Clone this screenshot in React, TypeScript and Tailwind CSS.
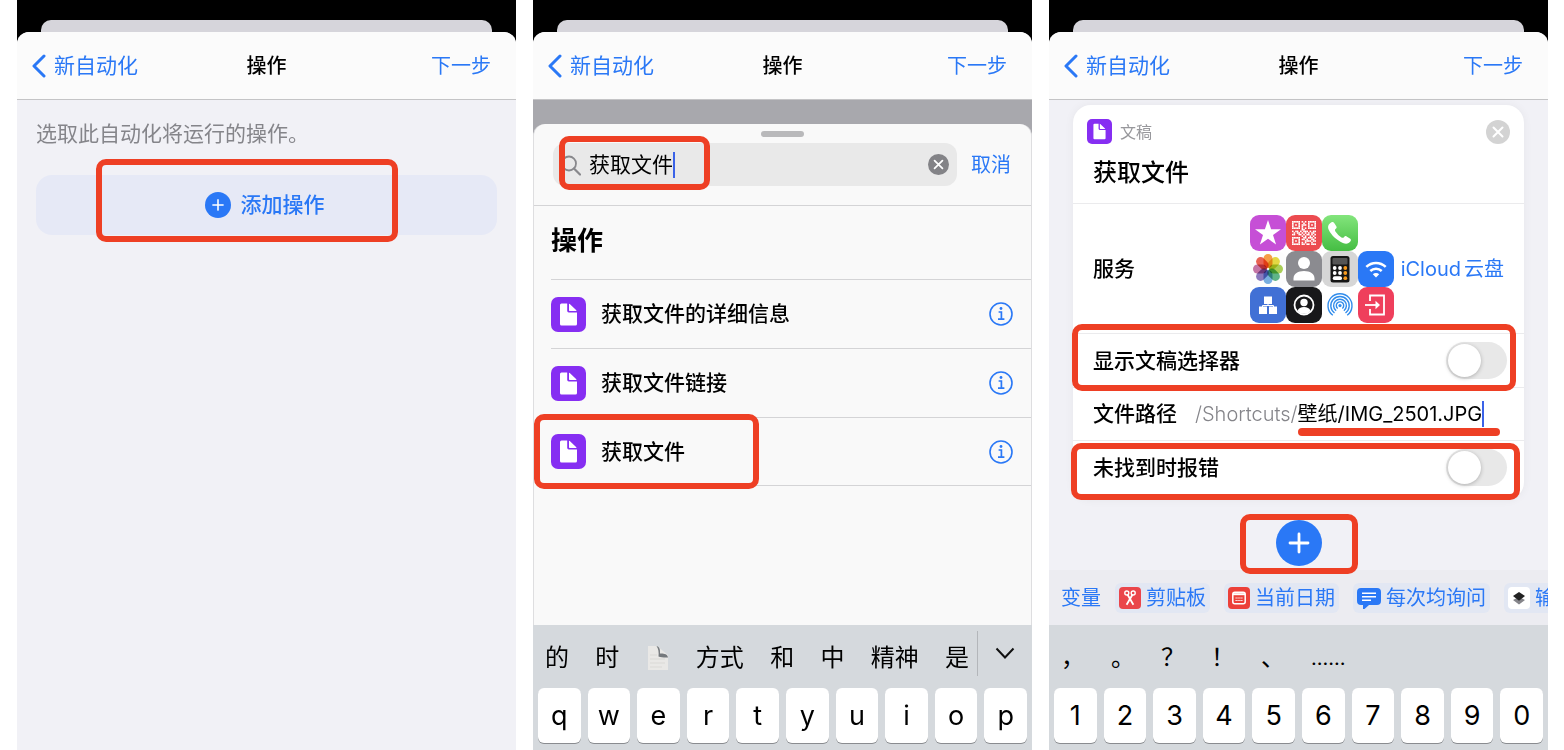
import type { ReactNode } from "react";

type ChildrenProps = {
  children: ReactNode;
};

const BLUE = "#2a78f6";

function BackIcon() {
  return (
    <svg width="14" height="24" viewBox="0 0 14 24" fill="none" aria-hidden="true">
      <path d="M12 2 2 12l10 10" stroke={BLUE} strokeWidth="3" strokeLinecap="round" strokeLinejoin="round" />
    </svg>
  );
}

function PlusCircle({ size }: { size: number }) {
  return (
    <svg width={size} height={size} viewBox="0 0 46 46" aria-hidden="true">
      <circle cx="23" cy="23" r="23" fill={BLUE} />
      <path d="M23 14v18M14 23h18" stroke="#fff" strokeWidth="2.8" strokeLinecap="round" />
    </svg>
  );
}

function CloseCircle({ size, fill }: { size: number; fill: string }) {
  return (
    <svg width={size} height={size} viewBox="0 0 24 24" aria-hidden="true">
      <circle cx="12" cy="12" r="12" fill={fill} />
      <path d="m7.5 7.5 9 9m0-9-9 9" stroke="#fff" strokeWidth="2" strokeLinecap="round" />
    </svg>
  );
}

function InfoIcon() {
  return (
    <svg width="24" height="24" viewBox="0 0 24 24" fill="none" stroke={BLUE} aria-hidden="true">
      <circle cx="12" cy="12" r="11" strokeWidth="1.6" />
      <path d="M9.6 10h2.8v7M9 17.2h6.4" strokeWidth="1.7" />
      <circle cx="12" cy="6.5" r="1.4" fill={BLUE} stroke="none" />
    </svg>
  );
}

function FileIcon({ size }: { size: number }) {
  return (
    <svg width={size} height={size} viewBox="0 0 35 35" aria-hidden="true">
      <rect width="35" height="35" rx="7" fill="#862ef2" />
      <path d="M10.500 6.500h5.700v7.300a1.600 1.600 0 0 0 1.600 1.600H26V27a1.500 1.500 0 0 1-1.500 1.500h-14A1.500 1.500 0 0 1 9 27V8a1.500 1.500 0 0 1 1.500-1.500z" fill="#fff" />
      <path d="M18 6.800c.5.1.9.4 1.300.8l5.500 5.200c.4.400.6.700.7 1.100H18.600a.6.600 0 0 1-.6-.6z" fill="#fff" />
    </svg>
  );
}

function StarIcon() {
  return (
    <svg width="36" height="36" viewBox="0 0 36 36" aria-hidden="true">
      <rect width="36" height="36" rx="9" fill="#c64fd6" />
      <path d="m18 5 3.100 9.300h9.900l-8 5.700 3.100 9.500L18 23.700l-8.100 5.800L13 20l-8-5.700h9.900z" fill="#fff" />
    </svg>
  );
}

const QR_ROWS = [
  "111110101011111",
  "100010010010001",
  "101010111010101",
  "100010100010001",
  "111110101011111",
  "000000110000000",
  "101101011101011",
  "010110101010110",
  "110011010110101",
  "000000101001010",
  "111110011011101",
  "100010110100110",
  "101010001111011",
  "100010101000100",
  "111110110110111",
];

function QrIcon() {
  return (
    <svg width="36" height="36" viewBox="0 0 36 36" aria-hidden="true">
      <rect width="36" height="36" rx="9" fill="#ec4b50" />
      {QR_ROWS.map((row, y) =>
        row.split("").map((cell, x) =>
          cell === "1" ? (
            <rect key={`${x}-${y}`} x={6 + x * 1.6} y={6 + y * 1.6} width="1.6" height="1.6" fill="#fff" />
          ) : null
        )
      )}
    </svg>
  );
}

function PhoneIcon() {
  return (
    <svg width="36" height="36" viewBox="0 0 36 36" aria-hidden="true">
      <defs>
        <linearGradient id="call" x1="0" y1="0" x2="0" y2="1">
          <stop offset="0" stopColor="#83e57c" />
          <stop offset="1" stopColor="#45bd43" />
        </linearGradient>
      </defs>
      <rect width="36" height="36" rx="9" fill="url(#call)" />
      <path d="M9.500 7.300c1.100-.8 2-.4 2.700.7l2.100 3.200c.6 1 .4 1.800-.5 2.600-1 .8-1.100 1.400-.4 2.600a22 22 0 0 0 6 6c1.200.7 1.900.6 2.700-.4.700-.9 1.500-1.200 2.500-.6l3.300 2.200c1.100.8 1.400 1.600.6 2.700-1.700 2.500-4.300 3.100-7.600 1.700C14.200 25 9.200 20 6.700 14.800c-1.400-3.200-.3-5.900 2.800-7.500z" fill="#fff" />
    </svg>
  );
}

const PETALS = ["#f79433", "#e3d62f", "#a3cb45", "#4fae7c", "#6aa7df", "#7f6bb8", "#c0679c", "#e9523f"];

function PhotosIcon() {
  return (
    <svg width="36" height="36" viewBox="0 0 36 36" aria-hidden="true">
      <rect width="36" height="36" rx="9" fill="#fdfdfd" />
      {PETALS.map((color, i) => (
        <rect
          key={color}
          x="13.500"
          y="3"
          width="9"
          height="14"
          rx="4.500"
          fill={color}
          opacity="0.900"
          className="mix-blend-multiply"
          transform={`rotate(${i * 45} 18 18)`}
        />
      ))}
    </svg>
  );
}

function ContactIcon() {
  return (
    <svg width="36" height="36" viewBox="0 0 36 36" aria-hidden="true">
      <rect width="36" height="36" rx="9" fill="#8b8b90" />
      <circle cx="18" cy="12" r="6" fill="#fff" />
      <path d="M7.500 29.500v-2c0-4.800 4.500-7.500 10.500-7.500s10.500 2.700 10.500 7.500v2z" fill="#fff" />
    </svg>
  );
}

function CalculatorIcon() {
  return (
    <svg width="36" height="36" viewBox="0 0 36 36" aria-hidden="true">
      <rect width="36" height="36" rx="9" fill="#d6d6d6" />
      <rect x="8.500" y="5" width="19" height="26.500" rx="2.500" fill="#161616" />
      <rect x="10.500" y="7" width="15" height="6.500" rx="1" fill="#555" />
      {[17, 22].map((y) => (
        <g key={y}>
          <circle cx="12.700" cy={y} r="1.900" fill="#fff" />
          <circle cx="18" cy={y} r="1.900" fill="#fff" />
          <circle cx="23.300" cy={y} r="1.900" fill="#f79a1e" />
        </g>
      ))}
      <rect x="10.800" y="25.300" width="9.200" height="3.800" rx="1.900" fill="#fff" />
      <circle cx="23.300" cy="27.200" r="1.900" fill="#f79a1e" />
    </svg>
  );
}

function WifiIcon() {
  return (
    <svg width="36" height="36" viewBox="0 0 36 36" aria-hidden="true">
      <rect width="36" height="36" rx="9" fill={BLUE} />
      <path d="M8.300 15.800a14 14 0 0 1 19.400 0M12.300 20a8.300 8.300 0 0 1 11.400 0" fill="none" stroke="#fff" strokeWidth="2.500" />
      <path d="M18 26.500 14.800 23.300a4.600 4.600 0 0 1 6.400 0z" fill="#fff" />
    </svg>
  );
}

function NetworkIcon() {
  return (
    <svg width="36" height="36" viewBox="0 0 36 36" aria-hidden="true">
      <rect width="36" height="36" rx="9" fill="#4170d5" />
      <path d="M14 9.500h8V17h-8zM9 19.500h8V27H9zM19 19.500h8V27h-8z" fill="#fff" />
      <path d="M18 17v1.500M12.500 20.500v-2h11v2" fill="none" stroke="#fff" />
    </svg>
  );
}

function AccountIcon() {
  return (
    <svg width="36" height="36" viewBox="0 0 36 36" aria-hidden="true">
      <rect width="36" height="36" rx="9" fill="#18181a" />
      <circle cx="18" cy="18" r="9.500" fill="none" stroke="#fff" strokeWidth="1.800" />
      <circle cx="18" cy="15.500" r="3.700" fill="#fff" />
      <path d="M11.500 24c1-3 3.400-4 6.500-4s5.500 1 6.500 4c-3.600 3.800-9.400 3.800-13 0z" fill="#fff" />
    </svg>
  );
}

function AirdropIcon() {
  return (
    <svg width="36" height="36" viewBox="0 0 36 36" aria-hidden="true">
      <g fill="none" stroke="#318ceb" strokeWidth="1.400">
        <path d="M10.800 28.300a12 12 0 1 1 14.400 0" />
        <path d="M12.500 26a9.200 9.200 0 1 1 11 0" />
        <path d="M14.100 23.700a6.400 6.400 0 1 1 7.800 0" />
        <path d="M15.700 21.500a3.700 3.700 0 1 1 4.600 0" />
      </g>
      <circle cx="18" cy="18.600" r="1.600" fill="#318ceb" />
    </svg>
  );
}

function ExitIcon() {
  return (
    <svg width="36" height="36" viewBox="0 0 36 36" aria-hidden="true">
      <rect width="36" height="36" rx="9" fill="#ef3f5c" />
      <g fill="none" stroke="#fff" strokeWidth="1.800">
        <path d="M12 14V8.500h14v19H12V22" />
        <path d="M7 18h12" />
      </g>
      <path d="m17.500 13.800 4.500 4.200-4.500 4.200z" fill="#fff" />
    </svg>
  );
}

function PageEmoji() {
  return (
    <svg width="24" height="26" viewBox="0 0 24 26" aria-hidden="true">
      <path d="M2 1h9l11 9v15H2z" fill="#e9e8e6" />
      <path d="M4 10h7M4 14h15M4 18h15M4 22h12" stroke="#dad9d6" />
      <path d="M10.500 1c4 1 3.500 5 3.500 7.500 3-.2 7.500 0 8 4-3 .3-7 0-9.500-1C13 7 12.500 4 10.500 1z" fill="#75797d" />
    </svg>
  );
}

// Red marker drawn over the spot the reader has to tap
function Marker({ className }: { className: string }) {
  return (
    <div className={`pointer-events-none absolute z-10 rounded-[10px] border-6 border-[#ee3f24] ${className}`} />
  );
}

function Caret() {
  return <span className="h-[26px] w-0.5 shrink-0 bg-[#3b63e8]" />;
}

function Phone({ children }: ChildrenProps) {
  return (
    <section className="flex min-w-0 flex-col overflow-hidden bg-black pt-5">
      <div className="mx-6 h-3 rounded-t-[10px] bg-[#d6d5db]" />
      <div className="flex flex-1 flex-col overflow-hidden rounded-t-xl bg-[#f1f1f6]">
        <header className="grid h-[68px] shrink-0 grid-cols-3 items-center border-b border-[#c4c4c6] bg-[#fbfbfb] px-[15px] text-[21px] leading-7">
          <button className="flex items-center gap-2 text-[#2a78f6]">
            <BackIcon />
            新自动化
          </button>
          <h1 className="text-center text-xl leading-7 font-medium">操作</h1>
          <button className="mr-2.5 justify-self-end text-xl leading-7 text-[#2a78f6]">下一步</button>
        </header>
        {children}
      </div>
    </section>
  );
}

function Keyboard({ keys, children }: ChildrenProps & { keys: string }) {
  return (
    <div className="shrink-0 bg-[#d5d9dd] pb-[7px]">
      <div className="flex h-[63px] pt-0.5 text-2xl leading-8">{children}</div>
      <div className="grid grid-cols-10 gap-[7px] px-[5px]">
        {keys.split("").map((key) => (
          <button
            key={key}
            className="h-[55px] rounded-md bg-white text-[27px] leading-8 shadow-[0_1px_0_#8a8c90]"
          >
            {key}
          </button>
        ))}
      </div>
    </div>
  );
}

function AddActionScreen() {
  return (
    <Phone>
      <div className="px-[19px] pt-5">
        <p className="text-[21px] leading-7 text-[#85858a]">选取此自动化将运行的操作。</p>
        <div className="relative mt-[27px]">
          <button className="flex h-[60px] w-full items-center justify-center gap-2.5 rounded-2xl bg-[#e6e9f6] pr-1 text-[21px] font-medium text-[#2a78f6]">
            <PlusCircle size={26} />
            添加操作
          </button>
          <Marker className="-top-4 right-[99px] -bottom-[7px] left-[60px]" />
        </div>
      </div>
    </Phone>
  );
}

const actions = ["获取文件的详细信息", "获取文件链接", "获取文件"];
const candidates = ["的", "时", "page", "方式", "和", "中", "精神", "是"];

function SearchScreen() {
  return (
    <Phone>
      <div className="flex flex-1 flex-col bg-[#a8a8ad] pt-6">
        <div className="flex flex-1 flex-col rounded-t-xl border-x border-[#dedee0] bg-[#f9f9f9]">
          <div className="border-b border-[#d4d4d6] pr-5 pb-[19px] pl-[19px]">
            <div className="flex h-[19px] justify-center pt-[7px]">
              <div className="h-1.5 w-[43px] rounded-full bg-[#b9b9bb]" />
            </div>
            <div className="flex items-center gap-3.5">
              <div className="relative flex h-[43px] flex-1 items-center rounded-xl bg-[#e9e9e9] px-2">
                <svg width="20" height="22" viewBox="0 0 20 22" fill="none" aria-hidden="true">
                  <circle cx="8" cy="9.500" r="7" stroke="#88888c" strokeWidth="1.800" />
                  <path d="m13 14.500 6 6" stroke="#88888c" strokeWidth="2.200" strokeLinecap="round" />
                </svg>
                <input
                  type="text"
                  aria-label="搜索操作"
                  defaultValue="获取文件"
                  className="ml-2 field-sizing-content bg-transparent text-[21px] leading-7 outline-none"
                />
                <Caret />
                <button aria-label="清除" className="ml-auto">
                  <CloseCircle size={21} fill="#838387" />
                </button>
                <Marker className="-top-[7px] -bottom-1 left-[6px] w-[151px]" />
              </div>
              <button className="text-xl leading-7 text-[#2a78f6]">取消</button>
            </div>
          </div>
          <h2 className="flex h-[73px] items-center pb-1 pl-[17px] text-[26px] leading-8 font-bold">操作</h2>
          <ul className="flex-1 pl-[17px]">
            {actions.map((action, i) => (
              <li
                key={action}
                className="relative flex h-[69px] items-center border-t border-[#d4d4d6] pr-[18px] last:border-b"
              >
                <FileIcon size={35} />
                <span className="ml-[15px] flex-1 text-[21px] leading-7 font-medium">{action}</span>
                <button aria-label={`${action}详情`}>
                  <InfoIcon />
                </button>
                {i === 2 && <Marker className="-top-1 -bottom-1 -left-[17px] w-[225px]" />}
              </li>
            ))}
          </ul>
        </div>
      </div>
      <Keyboard keys="qwertyuiop">
        <div className="flex flex-1 items-center justify-between pr-2 pl-3">
          {candidates.map((word) => (
            <button key={word} aria-label={word === "page" ? "文稿表情" : undefined}>
              {word === "page" ? <PageEmoji /> : word}
            </button>
          ))}
        </div>
        <button aria-label="展开候选词" className="mt-1 mb-3 flex w-[55px] justify-center border-l border-[#b3b6ba] pt-4">
          <svg width="20" height="12" viewBox="0 0 20 12" fill="none" aria-hidden="true">
            <path d="m1.500 1.500 8.500 9 8.500-9" stroke="#111" strokeWidth="2" />
          </svg>
        </button>
      </Keyboard>
    </Phone>
  );
}

function SwitchRow({ id, label, children }: ChildrenProps & { id: string; label: string }) {
  return (
    <div className="relative flex h-[54px] items-center justify-between border-t border-[#ebebed] pr-[17px] pl-5">
      <label htmlFor={id} className="text-[21px] leading-7 font-medium">
        {label}
      </label>
      <input
        id={id}
        type="checkbox"
        role="switch"
        className="h-[37px] w-[61px] appearance-none rounded-full bg-[#e8e8e8] p-0.5 before:block before:size-[33px] before:rounded-full before:bg-white before:shadow-[0_1px_4px_rgba(0,0,0,0.25)] checked:bg-green-500 checked:before:ml-6"
      />
      {children}
    </div>
  );
}

function VariablePill({ icon, label }: { icon: ReactNode; label: string }) {
  return (
    <button className="flex h-[30px] shrink-0 items-center gap-[5px] rounded-md bg-[#e2e7f3] px-1 whitespace-nowrap">
      {icon}
      {label}
    </button>
  );
}

function GetFileScreen() {
  return (
    <Phone>
      <div className="flex flex-1 flex-col px-6 pt-[5px]">
        <div className="rounded-[18px] bg-white pb-1.5 shadow-[0_0_10px_rgba(0,0,0,0.05)]">
          <div className="flex items-center pt-3.5 pr-3.5 pl-3.5">
            <FileIcon size={25} />
            <span className="ml-2 flex-1 text-base leading-6 text-[#98989c]">文稿</span>
            <button aria-label="移除操作">
              <CloseCircle size={24} fill="#d3d3d3" />
            </button>
          </div>
          <h2 className="px-5 pt-[13px] pb-3.5 text-2xl leading-8 font-medium">获取文件</h2>
          <div className="flex h-[130px] items-center justify-between border-t border-[#ebebed] pr-5 pl-5 text-[21px] leading-7">
            <span className="font-medium">服务</span>
            <button className="flex items-center gap-[7px] text-[#2a78f6]">
              <span className="grid grid-cols-4">
                <StarIcon />
                <QrIcon />
                <PhoneIcon />
                <span />
                <PhotosIcon />
                <ContactIcon />
                <CalculatorIcon />
                <WifiIcon />
                <NetworkIcon />
                <AccountIcon />
                <AirdropIcon />
                <ExitIcon />
              </span>
              <span className="flex gap-[3px] text-xl">
                <span>iCloud</span>
                <span>云盘</span>
              </span>
            </button>
          </div>
          <SwitchRow id="picker" label="显示文稿选择器">
            <Marker className="-top-2.5 right-2 -bottom-1 -left-px" />
          </SwitchRow>
          <div className="flex h-[53px] items-center border-t border-[#ebebed] pl-5">
            <label htmlFor="path" className="text-[21px] leading-7 font-medium">
              文件路径
            </label>
            <span className="ml-[18px] text-xl font-light text-[#85858a]">/Shortcuts/</span>
            <span className="relative flex items-center">
              <input
                id="path"
                type="text"
                defaultValue="壁纸/IMG_2501.JPG"
                className="field-sizing-content bg-transparent text-xl leading-7 outline-none"
              />
              <Caret />
              <span className="absolute top-full -right-4 left-0 h-2 rounded-full bg-[#ee3f24]" />
            </span>
          </div>
          <SwitchRow id="error" label="未找到时报错">
            <Marker className="top-0.5 right-1 -bottom-1.5 -left-0.5" />
          </SwitchRow>
        </div>
        <div className="relative mx-auto mt-5 flex">
          <button aria-label="添加操作">
            <PlusCircle size={46} />
          </button>
          <Marker className="-inset-x-9 -top-1.5 -bottom-2" />
        </div>
      </div>
      <div className="flex h-[55px] shrink-0 items-center gap-3.5 overflow-hidden bg-[#ececf1] pl-3 text-xl leading-7 text-[#2a78f6]">
        <button className="shrink-0">变量</button>
        <VariablePill
          label="剪贴板"
          icon={
            <svg width="22" height="22" viewBox="0 0 22 22" fill="none" aria-hidden="true">
              <rect width="22" height="22" rx="4" fill="#ea464b" />
              <g stroke="#fff" strokeWidth="1.400">
                <circle cx="7.800" cy="6" r="2" />
                <circle cx="14.200" cy="6" r="2" />
                <path d="m8.600 7.800 5.800 10M13.400 7.800l-5.800 10" strokeWidth="1.800" />
              </g>
            </svg>
          }
        />
        <VariablePill
          label="当前日期"
          icon={
            <svg width="22" height="22" viewBox="0 0 22 22" fill="none" aria-hidden="true">
              <rect width="22" height="22" rx="4" fill="#ec4039" />
              <rect x="4.800" y="5.300" width="12.400" height="11.400" rx="2" stroke="#fff" strokeWidth="1.500" />
              <path d="M5 7.200h12" stroke="#fff" strokeWidth="2" />
              <path d="M7.500 11h7M7.500 13.500h7" stroke="#fff" strokeWidth="1.200" strokeDasharray="1.300 .6" />
            </svg>
          }
        />
        <VariablePill
          label="每次均询问"
          icon={
            <svg width="24" height="22" viewBox="0 0 24 22" fill="none" aria-hidden="true">
              <path d="M4 1h16a4 4 0 0 1 4 4v9a4 4 0 0 1-4 4h-8l-4.500 4H6v-4H4a4 4 0 0 1-4-4V5a4 4 0 0 1 4-4z" fill={BLUE} />
              <path d="M5 6.200h14M5 9.700h14M5 13.200h9" stroke="#fff" strokeWidth="1.500" />
            </svg>
          }
        />
        <VariablePill
          label="输入"
          icon={
            <svg width="22" height="22" viewBox="0 0 22 22" aria-hidden="true">
              <rect width="22" height="22" rx="4" fill="#fff" />
              <path d="m11 10 6 3-6 4.500L5 13z" fill="#85858a" />
              <path d="m11 5 6 4-6 4.800L5 9z" fill="#222" />
            </svg>
          }
        />
      </div>
      <Keyboard keys="1234567890">
        <div className="flex items-center gap-[26px] pl-3">
          {["，", "。", "？", "！", "、"].map((mark) => (
            <button key={mark}>{mark}</button>
          ))}
          <button className="text-xl leading-8">……</button>
        </div>
      </Keyboard>
    </Phone>
  );
}

export default function App() {
  return (
    <main className="grid min-h-screen grid-cols-3 gap-[17px] bg-white pr-4 pl-[17px] font-['Inter','Noto_Sans_CJK_SC',sans-serif] text-black">
      <AddActionScreen />
      <SearchScreen />
      <GetFileScreen />
    </main>
  );
}
